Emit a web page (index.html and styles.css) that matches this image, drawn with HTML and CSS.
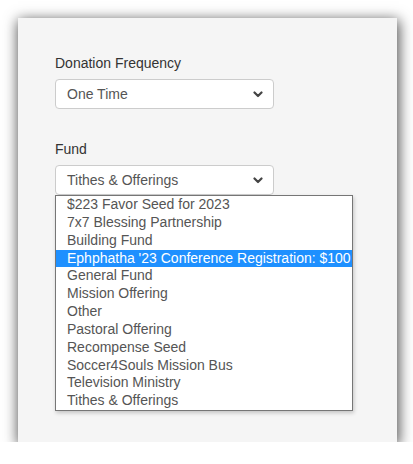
FILE: index.html
```html
<!DOCTYPE html>
<html>
  <head>
    <meta charset="utf-8">
    <title>Donation</title>
    <link rel="stylesheet" href="styles.css">
  </head>
  <body>
    <div class="panel">
      <div class="field">
        <label>Donation Frequency</label>
        <div class="select">
          <span>One Time</span>
          <svg class="chevron" width="10" height="7" viewBox="0 0 10 7">
            <polyline points="1.5,1.5 5,5 8.5,1.5" fill="none" stroke="#444" stroke-width="2.2" stroke-linecap="round" stroke-linejoin="round"></polyline>
          </svg>
        </div>
      </div>

      <div class="field">
        <label>Fund</label>
        <div class="select-wrap">
          <div class="select">
            <span>Tithes &amp; Offerings</span>
            <svg class="chevron" width="10" height="7" viewBox="0 0 10 7">
              <polyline points="1.5,1.5 5,5 8.5,1.5" fill="none" stroke="#444" stroke-width="2.2" stroke-linecap="round" stroke-linejoin="round"></polyline>
            </svg>
          </div>

          <ul class="options">
            <li>$223 Favor Seed for 2023</li>
            <li>7x7 Blessing Partnership</li>
            <li>Building Fund</li>
            <li class="active">Ephphatha '23 Conference Registration: $100</li>
            <li>General Fund</li>
            <li>Mission Offering</li>
            <li>Other</li>
            <li>Pastoral Offering</li>
            <li>Recompense Seed</li>
            <li>Soccer4Souls Mission Bus</li>
            <li>Television Ministry</li>
            <li>Tithes &amp; Offerings</li>
          </ul>
        </div>
      </div>
    </div>
  </body>
</html>
```

FILE: styles.css
```css
html, body {
  margin: 0;
  padding: 0;
  background: white;
  font-family: "Liberation Sans", Arial, sans-serif;
}

body {
  padding: 18px 0 0 18px;
}

.panel {
  width: 379px;
  height: 424px;
  box-sizing: border-box;
  padding: 35px 0 0 37px;
  background: #f5f5f5;
  box-shadow: 1px 3px 13px 1px rgba(0, 0, 0, 0.7);

  display: flex;
  flex-direction: column;
  gap: 30px;
}

.field {
  display: flex;
  flex-direction: column;
  gap: 6px;
}

.field label {
  font-size: 14px;
  line-height: 20px;
  color: #333;
}

.select-wrap {
  position: relative;
}

.select {
  width: 219px;
  height: 30px;
  box-sizing: border-box;
  padding: 0 10px 0 11px;
  background: white;
  border: 1px solid #ccc;
  border-radius: 4px;

  display: flex;
  align-items: center;
  justify-content: space-between;

  font-size: 14px;
  color: #555;
}

.options {
  position: absolute;
  top: 30px;
  left: 0;
  width: 298px;
  margin: 0;
  padding: 0;
  list-style: none;
  box-sizing: border-box;
  background: white;
  border: 1px solid #767676;
  box-shadow: 1px 2px 4px rgba(0, 0, 0, 0.2);

  font-size: 14px;
  color: #555;
}

.options li {
  height: 17.85px;
  line-height: 17.85px;
  padding-left: 11px;
  white-space: nowrap;
}

.options li.active {
  background: #1e90ff;
  color: white;
}
```
